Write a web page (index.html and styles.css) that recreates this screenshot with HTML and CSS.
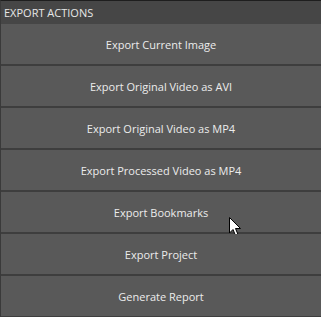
FILE: index.html
```html
<!DOCTYPE html>
<html lang="en">
<head>
  <meta charset="UTF-8" />
  <title>Export Actions</title>
  <link rel="stylesheet" href="styles.css">
</head>
<body>
  <div class="panel">
    <div class="panel-header">EXPORT ACTIONS</div>
    <div class="action-list">
      <button class="action-btn">Export Current Image</button>
      <button class="action-btn">Export Original Video as AVI</button>
      <button class="action-btn">Export Original Video as MP4</button>
      <button class="action-btn">Export Processed Video as MP4</button>
      <button class="action-btn hover">Export Bookmarks
        <svg class="cursor" width="13" height="20" viewBox="0 0 13 20">
          <path d="M0.5 0.5 L0.5 16 L4 12.5 L6.5 18.5 L9 17.5 L6.5 11.5 L11.5 11.5 Z" fill="#fff" stroke="#000" stroke-width="1" stroke-linejoin="miter"/>
        </svg>
      </button>
      <button class="action-btn">Export Project</button>
      <button class="action-btn">Generate Report</button>
    </div>
  </div>
</body>
</html>
```

FILE: styles.css
```css
* {
  box-sizing: border-box;
}

body {
  margin: 0;
  background: #3c3c3c;
  font-family: 'Open Sans', 'Noto Sans', 'DejaVu Sans', sans-serif;
}

.panel {
  width: 321px;
  height: 317px;
  border-top: 1px solid #1e1e1e;
  border-left: 1px solid #3a3a3a;
  background: #3e3e3e;
}

.panel-header {
  height: 23px;
  background: #464646;
  color: #e6e6e6;
  font-size: 11px;
  line-height: 23px;
  padding-left: 3px;
}

.action-list {
  display: flex;
  flex-direction: column;
  gap: 2px;
}

.action-btn {
  position: relative;
  height: 40px;
  border: none;
  background: #595959;
  color: #ececec;
  font-family: inherit;
  font-size: 11px;
  padding: 0;
  cursor: pointer;
}

.cursor {
  position: absolute;
  left: 228px;
  top: 25px;
}
```
